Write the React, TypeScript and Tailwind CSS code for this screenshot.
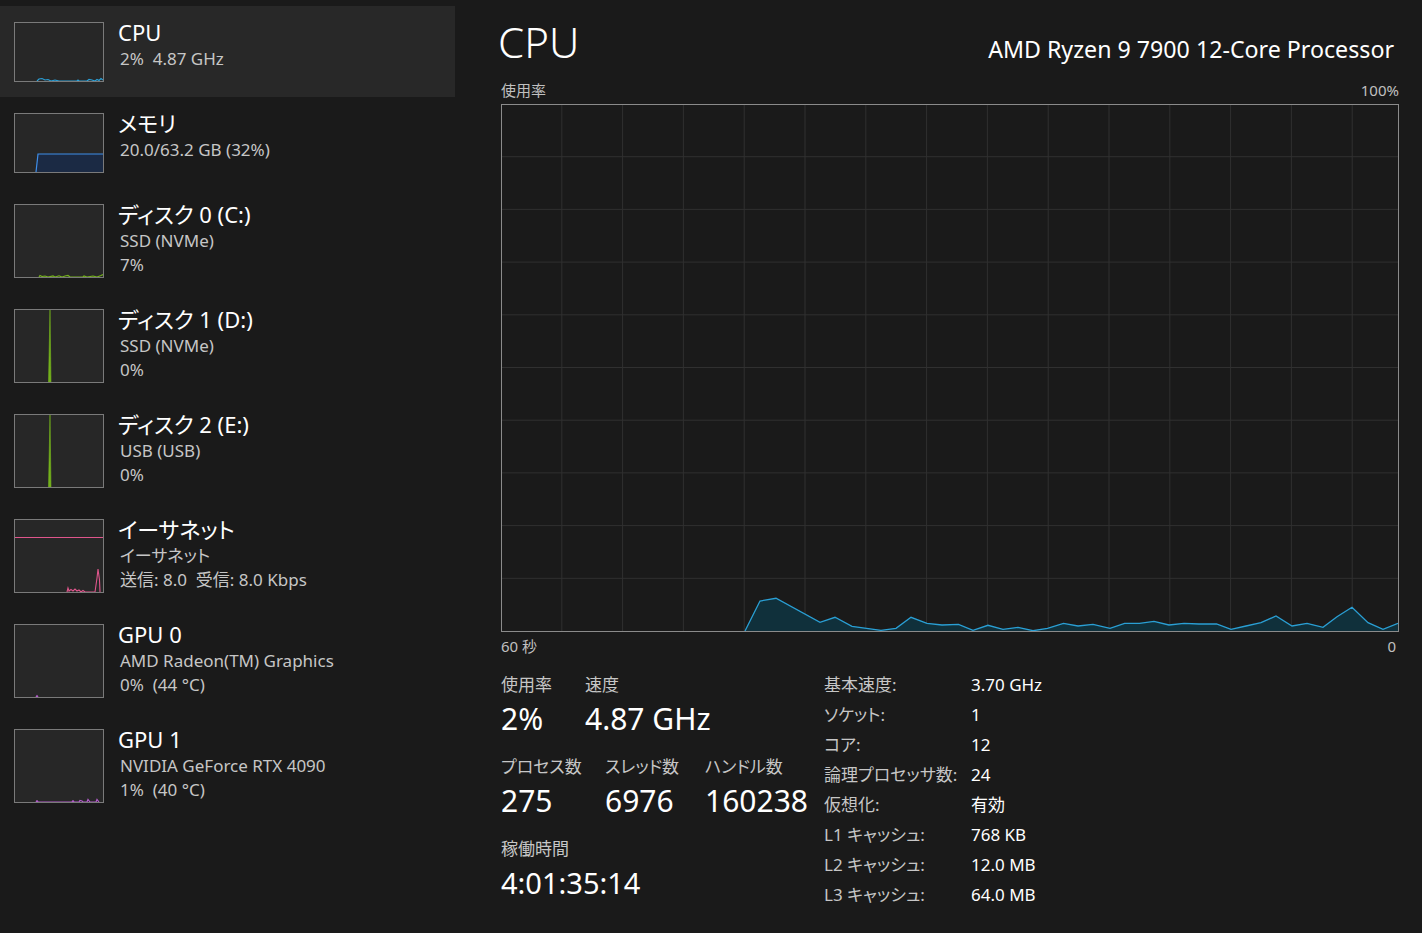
import React from "react";

type Item = {
  title: string;
  lines: string[];
  graph: "cpu" | "mem" | "disk0" | "spike" | "eth" | "gpu0" | "gpu1";
  selected?: boolean;
};

const items: Item[] = [
  { title: "CPU", lines: ["2%  4.87 GHz"], graph: "cpu", selected: true },
  { title: "メモリ", lines: ["20.0/63.2 GB (32%)"], graph: "mem" },
  { title: "ディスク 0 (C:)", lines: ["SSD (NVMe)", "7%"], graph: "disk0" },
  { title: "ディスク 1 (D:)", lines: ["SSD (NVMe)", "0%"], graph: "spike" },
  { title: "ディスク 2 (E:)", lines: ["USB (USB)", "0%"], graph: "spike" },
  { title: "イーサネット", lines: ["イーサネット", "送信: 8.0  受信: 8.0 Kbps"], graph: "eth" },
  { title: "GPU 0", lines: ["AMD Radeon(TM) Graphics", "0%  (44 °C)"], graph: "gpu0" },
  { title: "GPU 1", lines: ["NVIDIA GeForce RTX 4090", "1%  (40 °C)"], graph: "gpu1" },
];

// cpu history, chart-inner pixel coords (896 x 526)
const cpuPts: [number, number][] = [
  [243, 526], [258, 496], [274, 493.3], [318, 517.3], [333, 512.3], [350, 521.3],
  [379, 525.3], [394, 523.3], [409, 512.3], [425, 518.3], [440, 520], [456.5, 519.3],
  [471, 525.3], [486, 520.3], [501, 524.3], [516, 522.3], [531, 525.7], [545.5, 523.3],
  [561.5, 518.3], [576, 521], [591, 519.3], [608, 523.3], [622.6, 518.3], [637.5, 518.3],
  [652, 516.3], [667, 520], [682, 518.3], [697, 519], [714.5, 519], [729, 524.3],
  [744, 521], [759, 517.7], [774, 511], [790, 521], [805, 518.3], [821, 522.3],
  [835, 511.7], [850, 502.3], [866, 517.7], [881, 524.3], [896, 518.3],
];

function Thumb({ graph, h }: { graph: Item["graph"]; h: number }) {
  const H = h - 2;
  return (
    <div
      className="w-[90px] shrink-0 border border-[#7a7a7a] bg-[#272727]"
      style={{ height: h }}
    >
      <svg width="88" height={H} viewBox={`0 0 88 ${H}`} className="block">
        {graph === "cpu" && (
          <polyline
            points="22,58 24,56 27,55.5 30,57 33,56.5 36,58 40,57 44,58 62,58 63,57 64,58 72,58 74,56.5 77,57 80,58 82,56.5 84,57.5 86,55.5 88,57"
            fill="none"
            stroke="#2a9fd6"
            strokeWidth="1.2"
          />
        )}
        {graph === "mem" && (
          <>
            <polygon points="21,58 23,40 88,40 88,58" fill="#1b2a44" />
            <polyline points="21,58 23,40 88,40" fill="none" stroke="#3f8ee8" strokeWidth="1.2" />
          </>
        )}
        {graph === "disk0" && (
          <polyline
            points="24,72 25,70.5 27,71.5 30,71 33,72 38,71 40,72 44,70.8 47,72 50,71 53,70.5 55,72 68,72 69,71 72,72 78,71 82,72 86,70.5 88,69.5"
            fill="none"
            stroke="#74b11c"
            strokeWidth="1.2"
          />
        )}
        {graph === "spike" && (
          <polygon points="33.5,72 35,0 36,72" fill="#74b11c" stroke="#74b11c" strokeWidth="0.6" />
        )}
        {graph === "eth" && (
          <>
            <line x1="0" y1="17.5" x2="88" y2="17.5" stroke="#e0568c" strokeWidth="1.2" />
            <polyline
              points="52,72 53,68 54,71 56,69.5 58,71 60,69 62,71 64,70 66,72 68,70.5 70,72 80,72 82,58 83,49 84.5,60 85,72"
              fill="none"
              stroke="#e0568c"
              strokeWidth="1.1"
            />
          </>
        )}
        {graph === "gpu0" && (
          <polyline points="21,72 22,70.8 23,72" fill="none" stroke="#b35ccb" strokeWidth="1.2" />
        )}
        {graph === "gpu1" && (
          <polyline
            points="21,72 22,70.8 23,72 57,72 58,70.8 59,72 64,72 65,70.5 67,71 68,72 72,72 73,69.5 75,72 81,72 82,69.5 84,72"
            fill="none"
            stroke="#b35ccb"
            strokeWidth="1.2"
          />
        )}
      </svg>
    </div>
  );
}

function SideItem({ item }: { item: Item }) {
  const h = item.lines.length > 1 ? 74 : 60;
  return (
    <div
      className={`flex items-start gap-[14px] pt-4 pb-[15px] pl-[14px] ${
        item.selected ? "bg-[#282828]" : ""
      }`}
    >
      <Thumb graph={item.graph} h={h} />
      <div className="flex flex-col">
        <div className="text-[22px] leading-[20px] text-white whitespace-pre">{item.title}</div>
        <div className="mt-[5px] flex flex-col pl-[2px] text-[17px] leading-[24px] text-[#c6c6c6]">
          {item.lines.map((l) => (
            <div key={l} className="whitespace-pre">
              {l}
            </div>
          ))}
        </div>
      </div>
    </div>
  );
}

function CpuChart() {
  const cols = Array.from({ length: 14 }, (_, i) => 60.8 * (i + 1) - 1);
  const rows = Array.from({ length: 9 }, (_, i) => 52.7 * (i + 1) - 1);
  const line = cpuPts.map((p) => p.join(",")).join(" ");
  const area = `${line} 896,526 243,526`;
  return (
    <div className="h-[528px] w-[898px] border border-[#8b8b8b]">
      <svg width="896" height="526" viewBox="0 0 896 526" className="block">
        {cols.map((x) => (
          <line key={x} x1={x} y1="0" x2={x} y2="526" stroke="#303030" strokeWidth="1" />
        ))}
        {rows.map((y) => (
          <line key={y} x1="0" y1={y} x2="896" y2={y} stroke="#303030" strokeWidth="1" />
        ))}
        <polygon points={area} fill="#10303b" />
        <polyline points={line} fill="none" stroke="#2a9fd4" strokeWidth="1.3" />
      </svg>
    </div>
  );
}

function Stat({
  label,
  value,
  w,
  size,
}: {
  label: string;
  value: string;
  w?: string;
  size?: string;
}) {
  return (
    <div className={`flex flex-col ${w ?? ""}`}>
      <div className="text-[17px] leading-[22px] text-[#c6c6c6]">{label}</div>
      <div className={`mt-[3px] leading-[40px] text-white ${size ?? "text-[30px]"}`}>{value}</div>
    </div>
  );
}

const specs: [string, string][] = [
  ["基本速度:", "3.70 GHz"],
  ["ソケット:", "1"],
  ["コア:", "12"],
  ["論理プロセッサ数:", "24"],
  ["仮想化:", "有効"],
  ["L1 キャッシュ:", "768 KB"],
  ["L2 キャッシュ:", "12.0 MB"],
  ["L3 キャッシュ:", "64.0 MB"],
];

export default function App() {
  return (
    <div className="flex h-[933px] w-[1422px] overflow-hidden bg-[#1a1a1a] font-['Noto_Sans','Noto_Sans_CJK_JP',sans-serif] [font-feature-settings:'palt']">
      <aside className="w-[455px] shrink-0 pt-[6px]">
        {items.map((it) => (
          <SideItem key={it.title} item={it} />
        ))}
      </aside>

      <main className="ml-[46px] flex w-[898px] flex-col pt-4">
        <div className="flex h-[52px] items-baseline justify-between">
          <div className="-ml-[3px] text-[42px] font-light leading-[52px] text-white">CPU</div>
          <div className="mr-[5px] text-[23.2px] leading-[52px] text-white">
            AMD Ryzen 9 7900 12-Core Processor
          </div>
        </div>

        <div className="mt-[12px] flex justify-between text-[15px] leading-[20px] text-[#c0c0c0]">
          <span>使用率</span>
          <span>100%</span>
        </div>

        <div className="mt-[4px]">
          <CpuChart />
        </div>

        <div className="mt-[4px] flex justify-between pr-[3px] text-[15px] leading-[20px] text-[#c0c0c0]">
          <span>60 秒</span>
          <span>0</span>
        </div>

        <div className="mt-[18px] flex">
          <div className="flex w-[323px] flex-col gap-[17px]">
            <div className="flex">
              <Stat label="使用率" value="2%" w="w-[84px]" />
              <Stat label="速度" value="4.87 GHz" />
            </div>
            <div className="flex">
              <Stat label="プロセス数" value="275" w="w-[104px]" />
              <Stat label="スレッド数" value="6976" w="w-[100px]" />
              <Stat label="ハンドル数" value="160238" />
            </div>
            <Stat label="稼働時間" value="4:01:35:14" size="text-[29px]" />
          </div>

          <div className="-mt-[4px] grid grid-cols-[147px_auto] text-[17px] leading-[30px]">
            {specs.map(([k, v]) => (
              <React.Fragment key={k}>
                <div className="text-[#c6c6c6]">{k}</div>
                <div className="text-white">{v}</div>
              </React.Fragment>
            ))}
          </div>
        </div>
      </main>
    </div>
  );
}
